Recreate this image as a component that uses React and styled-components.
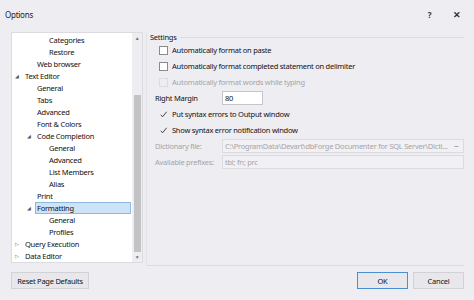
import React from "react";
import styled, { createGlobalStyle } from "styled-components";

const Global = createGlobalStyle`
  html, body { margin: 0; padding: 0; }
  body { font-family: "Noto Sans", "Open Sans", sans-serif; }
`;

const Window = styled.div`
  width: 474px;
  height: 300px;
  background: #eeedf2;
  color: #111;
  font-size: 7.5px;
  letter-spacing: -0.25px;
  display: flex;
  flex-direction: column;
  overflow: hidden;
`;

const TitleBar = styled.div`
  height: 28px;
  display: flex;
  align-items: center;
  padding: 0 4px 0 5px;
  font-size: 8px;
  color: #222;
`;

const Title = styled.div`
  flex: 1;
`;

const TitleButton = styled.div`
  width: 27px;
  text-align: center;
  font-size: ${(p) => p.size || 8}px;
  font-weight: bold;
  color: #333;
`;

const Body = styled.div`
  display: flex;
  padding: 4px 10px 0 11px;
  height: 232px;
`;

const Tree = styled.div`
  width: 132px;
  flex-shrink: 0;
  height: 231px;
  background: #fff;
  border: 1px solid #dcdce0;
  box-sizing: border-box;
  display: flex;
`;

const TreeList = styled.div`
  flex: 1;
  padding-top: 1px;
`;

const TreeRow = styled.div`
  height: 12px;
  line-height: 12px;
  display: flex;
  align-items: center;
  padding-left: ${(p) => p.indent}px;
  white-space: nowrap;
`;

const Arrow = styled.span`
  width: 8px;
  font-size: 5px;
  color: #555;
  margin-left: -8px;
`;

const Label = styled.span`
  padding: 0 2px;
  height: 12px;
  box-sizing: border-box;
  ${(p) =>
    p.selected &&
    `background:#cde3f7;border:1px solid #8fb8de;flex:1;margin-right:1px;line-height:10px;padding-left:1px;`}
`;

const ScrollBar = styled.div`
  width: 10px;
  background: #eeedf2;
  display: flex;
  flex-direction: column;
  align-items: center;
  font-size: 5px;
  color: #777;
`;

const ScrollArrow = styled.div`
  height: 10px;
  line-height: 10px;
`;

const Thumb = styled.div`
  width: 7px;
  background: #c3c3c5;
  margin-top: ${(p) => p.top}px;
  height: ${(p) => p.h}px;
`;

const Spacer = styled.div`
  flex: 1;
`;

const Group = styled.div`
  flex: 1;
  min-width: 0;
  margin-left: 3px;
  height: 233px;
  border-left: 1px solid #e4e3e8;
  border-bottom: 1px solid #dcdce0;
  display: flex;
  flex-direction: column;
`;

const Legend = styled.div`
  display: flex;
  align-items: center;
  height: 10px;
  padding-left: 3px;
  gap: 3px;
`;

const LegendLine = styled.div`
  flex: 1;
  height: 1px;
  background: #dcdce0;
`;

const Rows = styled.div`
  padding: 0 0 0 9px;
  display: flex;
  flex-direction: column;
`;

const Row = styled.div`
  height: 16px;
  display: flex;
  align-items: center;
  white-space: nowrap;
  color: ${(p) => (p.disabled ? "#a5a5a8" : "#111")};
`;

const Box = styled.span`
  width: 9px;
  height: 9px;
  box-sizing: border-box;
  border: 1px solid ${(p) => (p.disabled ? "#dcdce0" : "#8b8b8e")};
  background: ${(p) => (p.disabled ? "#eeedf2" : "#fff")};
  margin-right: 4px;
  margin-left: 3px;
`;

const Check = styled.svg`
  width: 9px;
  height: 9px;
  margin-left: 3px;
  margin-right: 4px;
`;

const FieldLabel = styled.span`
  width: 67px;
  flex-shrink: 0;
  color: ${(p) => (p.disabled ? "#a5a5a8" : "#111")};
`;

const Input = styled.div`
  height: 14px;
  box-sizing: border-box;
  border: 1px solid ${(p) => (p.disabled ? "#dcdce0" : "#c6c6ca")};
  background: ${(p) => (p.disabled ? "#f1f0f4" : "#fff")};
  color: ${(p) => (p.disabled ? "#a5a5a8" : "#111")};
  width: ${(p) => (p.w ? p.w + "px" : "auto")};
  flex: ${(p) => (p.w ? "none" : 1)};
  min-width: 0;
  display: flex;
  align-items: center;
  padding-left: 2px;
  white-space: nowrap;
  overflow: hidden;
`;

const InputText = styled.span`
  flex: 1;
  min-width: 0;
  overflow: hidden;
`;

const Dots = styled.span`
  width: 14px;
  flex-shrink: 0;
  text-align: center;
  color: #777;
  font-size: 7px;
  letter-spacing: -0.5px;
`;

const FieldRow = styled(Row)`
  margin-left: -1px;
`;

const Footer = styled.div`
  display: flex;
  align-items: center;
  padding: 8px 10px 0 11px;
`;

const Button = styled.div`
  height: 17px;
  box-sizing: border-box;
  border: 1px solid ${(p) => (p.primary ? "#4a8fd0" : "#d2d2d6")};
  background: #e8e7ec;
  display: flex;
  align-items: center;
  justify-content: center;
  white-space: nowrap;
  width: ${(p) => p.w}px;
  margin-left: ${(p) => p.ml || 0}px;
`;

const tree = [
  [49, null, "Categories"],
  [49, null, "Restore"],
  [37, null, "Web browser"],
  [25, "◢", "Text Editor"],
  [37, null, "General"],
  [37, null, "Tabs"],
  [37, null, "Advanced"],
  [37, null, "Font & Colors"],
  [37, "◢", "Code Completion"],
  [49, null, "General"],
  [49, null, "Advanced"],
  [49, null, "List Members"],
  [49, null, "Alias"],
  [37, null, "Print"],
  [37, "◢", "Formatting", true],
  [49, null, "General"],
  [49, null, "Profiles"],
  [25, "▷", "Query Execution"],
  [25, "▷", "Data Editor"],
];

const Tick = () => (
  <Check viewBox="0 0 9 9">
    <path d="M1.8 4.8 L3.6 6.8 L7.6 1.8" fill="none" stroke="#333" strokeWidth="0.9" />
  </Check>
);

export default function App() {
  return (
    <Window>
      <Global />
      <TitleBar>
        <Title>Options</Title>
        <TitleButton size={8}>?</TitleButton>
        <TitleButton size={9}>✕</TitleButton>
      </TitleBar>
      <Body>
        <Tree>
          <TreeList>
            {tree.map(([indent, arrow, text, sel], i) => (
              <TreeRow key={i} indent={indent - 14}>
                {arrow && <Arrow>{arrow}</Arrow>}
                <Label selected={sel}>{text}</Label>
              </TreeRow>
            ))}
          </TreeList>
          <ScrollBar>
            <ScrollArrow>▲</ScrollArrow>
            <Thumb top={52} h={158} />
            <Spacer />
            <ScrollArrow>▼</ScrollArrow>
          </ScrollBar>
        </Tree>
        <Group>
          <Legend>
            <span>Settings</span>
            <LegendLine />
          </Legend>
          <Rows>
            <Row>
              <Box />
              Automatically format on paste
            </Row>
            <Row>
              <Box />
              Automatically format completed statement on delimiter
            </Row>
            <Row disabled>
              <Box disabled />
              Automatically format words while typing
            </Row>
            <FieldRow>
              <FieldLabel>Right Margin</FieldLabel>
              <Input w={41}>80</Input>
            </FieldRow>
            <Row>
              <Tick />
              Put syntax errors to Output window
            </Row>
            <Row>
              <Tick />
              Show syntax error notification window
            </Row>
            <FieldRow>
              <FieldLabel disabled>Dictionary file:</FieldLabel>
              <Input disabled>
                <InputText>C:\ProgramData\Devart\dbForge Documenter for SQL Server\Dicti...</InputText>
                <Dots>···</Dots>
              </Input>
            </FieldRow>
            <FieldRow>
              <FieldLabel disabled>Available prefixes:</FieldLabel>
              <Input disabled>tbl; fn; prc</Input>
            </FieldRow>
          </Rows>
        </Group>
      </Body>
      <Footer>
        <Button w={78}>Reset Page Defaults</Button>
        <Spacer />
        <Button primary w={51}>OK</Button>
        <Button w={51} ml={5}>Cancel</Button>
      </Footer>
    </Window>
  );
}
